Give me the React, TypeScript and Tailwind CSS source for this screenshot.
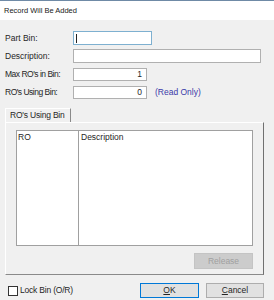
import React from "react";

const font = { fontFamily: '"Liberation Sans", Arial, sans-serif' };

function Row({ label, tight, children }: { label: string; tight?: boolean; children: React.ReactNode }) {
  return (
    <div className="flex items-center h-[14px]">
      <div className={"w-[73px] pl-[5px] text-[8.5px] text-[#262626] leading-none whitespace-nowrap " + (tight ? "tracking-[-0.5px]" : "")}>{label}</div>
      {children}
    </div>
  );
}

export default function App() {
  return (
    <div className="w-[274px] h-[300px] bg-[#f0f0f0] overflow-hidden flex flex-col" style={font}>
      <div className="h-[20px] bg-white border-t border-[#6f8aa6] flex items-center pl-[4px] text-[7.5px] text-[#222]">
        Record Will Be Added
      </div>
      <div className="pt-[11px] flex flex-col gap-[4px]">
        <Row label="Part Bin:">
          <div className="w-[79px] h-[14px] bg-white border border-[#7eb0d0] flex items-center pl-[2px]">
            <div className="w-px h-[9px] bg-[#222]" />
          </div>
        </Row>
        <Row label="Description:">
          <div className="w-[188px] h-[14px] bg-white border border-[#b0b0b0]" />
        </Row>
        <Row label="Max RO's in Bin:" tight>
          <div className="w-[74px] h-[13px] bg-white border border-[#b0b0b0] flex items-center justify-end pr-[4px] text-[8.5px] leading-none text-[#262626]">1</div>
        </Row>
        <Row label="RO's Using Bin:" tight>
          <div className="w-[74px] h-[13px] bg-white border border-[#b0b0b0] flex items-center justify-end pr-[4px] text-[8.5px] leading-none text-[#262626]">0</div>
          <div className="ml-[8px] text-[8.5px] text-[#3a3aa8] leading-none">(Read Only)</div>
        </Row>
      </div>
      <div className="mt-[9px] pl-[5px]">
        <div className="w-[66px] h-[14px] border-t border-l border-white border-r border-r-[#8a8a8a] flex items-center pl-[4px] text-[8.5px] text-[#262626] leading-none whitespace-nowrap tracking-[-0.2px]">
          RO's Using Bin
        </div>
      </div>
      <div className="ml-[5px] w-[259px] h-[153px] border border-t-white border-l-white border-r-[#707070] border-b-[#8a8a8a] pt-[7px] pl-[10px] flex flex-col">
        <div className="w-[237px] h-[116px] bg-white border border-[#a0a0a0] flex">
          <div className="w-[62px] border-r border-[#a0a0a0] h-full pl-[1px] pt-[1px] text-[8.5px] text-[#262626] leading-[11px]">RO</div>
          <div className="pl-[2px] pt-[1px] text-[8.5px] text-[#262626] leading-[11px]">Description</div>
        </div>
        <div className="flex justify-end w-[237px] mt-[7px]">
          <div className="w-[59px] h-[16px] bg-[#cccccc] border border-[#c4c4c4] flex items-center justify-center text-[8.5px] text-[#a0a0a0]">
            Release
          </div>
        </div>
      </div>
      <div className="mt-[8px] flex items-center h-[15px]">
        <div className="w-[140px] flex items-center">
          <div className="ml-[8px] w-[10px] h-[10px] border border-[#333] bg-white" />
          <div className="ml-[2px] text-[8.5px] text-[#262626] leading-none whitespace-nowrap tracking-[-0.2px]">Lock Bin (O/R)</div>
        </div>
        <div className="w-[59px] h-[15px] bg-[#e1e1e1] border border-[#0078d7] flex items-center justify-center text-[8.5px] text-[#262626]">
          <span><span className="underline">O</span>K</span>
        </div>
        <div className="ml-[7px] w-[58px] h-[15px] bg-[#e1e1e1] border border-[#adadad] flex items-center justify-center text-[8.5px] text-[#262626]">
          <span><span className="underline">C</span>ancel</span>
        </div>
      </div>
    </div>
  );
}
